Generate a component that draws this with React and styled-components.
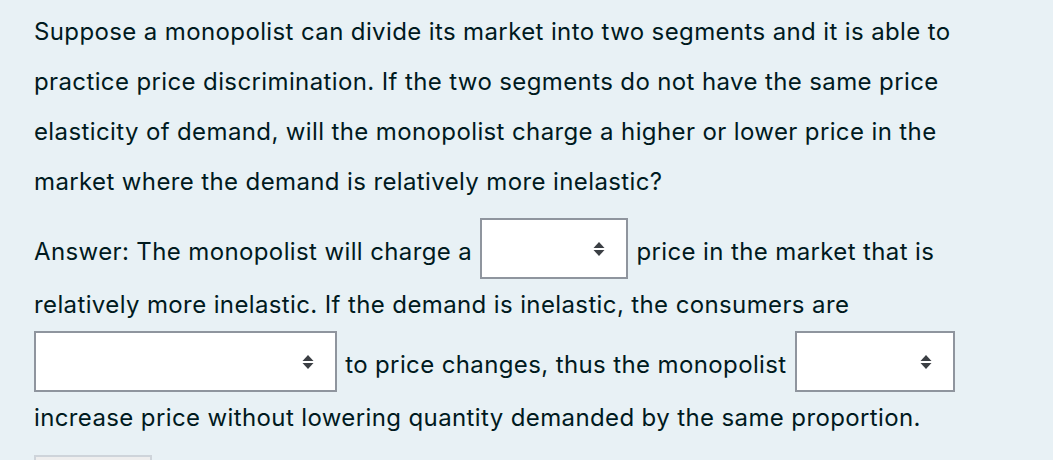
import styled, { createGlobalStyle } from "styled-components";

const GlobalStyle = createGlobalStyle`
  body {
    margin: 0;
    background: #ffffff;
    font-family: Inter, "Noto Sans", "Liberation Sans", sans-serif;
  }
`;

const Formulation = styled.div`
  width: 1053px;
  height: 460px;
  overflow: hidden;
  box-sizing: border-box;
  padding: 7px 59px 0 34px;
  background-color: #e8f1f5;
  color: #001a1e;
  font-size: 24px;
  letter-spacing: 0.38px;
  line-height: 50px;
`;

const Question = styled.p`
  margin: 0 0 11px;
`;

const Answer = styled.div`
  line-height: 52px;
`;

// the box's baseline is the bottom of the centred icon
const SelectBox = styled.span`
  display: inline-flex;
  align-items: center;
  justify-content: flex-end;
  box-sizing: border-box;
  width: ${(p) => p.$width}px;
  height: 61px;
  padding-right: 21px;
  margin: 0 1px;
  vertical-align: 4px;
  background: #ffffff;
  border: 2px solid #8f959e;
`;

const CheckButton = styled.div`
  width: 118px;
  height: 40px;
  margin-top: 11px;
  box-sizing: border-box;
  background: #eeeeee;
  border: 2px solid #ced4da;
`;

const SortIcon = () => (
  <svg width="12" height="14" viewBox="0 0 12 14" aria-hidden="true">
    <path d="M6 0 L11.5 6 L0.5 6 Z" fill="#3b3f44" />
    <path d="M0.5 8 L11.5 8 L6 14 Z" fill="#3b3f44" />
  </svg>
);

const Select = ({ width, first }) => (
  <SelectBox $width={width} style={first ? { marginLeft: 0 } : undefined}>
    <SortIcon />
  </SelectBox>
);

const App = () => (
  <>
    <GlobalStyle />
    <Formulation>
      <Question>
        Suppose a monopolist can divide its market into two segments and it is able to
        practice price discrimination. If the two segments do not have the same price
        elasticity of demand, will the monopolist charge a higher or lower price in the
        market where the demand is relatively more inelastic?
      </Question>
      <Answer>
        Answer: The monopolist will charge a <Select width={148} /> price in the market that is
        relatively more inelastic. If the demand is inelastic, the consumers are{" "}
        <Select width={303} first /> to price changes, thus the monopolist <Select width={160} />
        increase price without lowering quantity demanded by the same proportion.
      </Answer>
      <CheckButton />
    </Formulation>
  </>
);

export default App;
